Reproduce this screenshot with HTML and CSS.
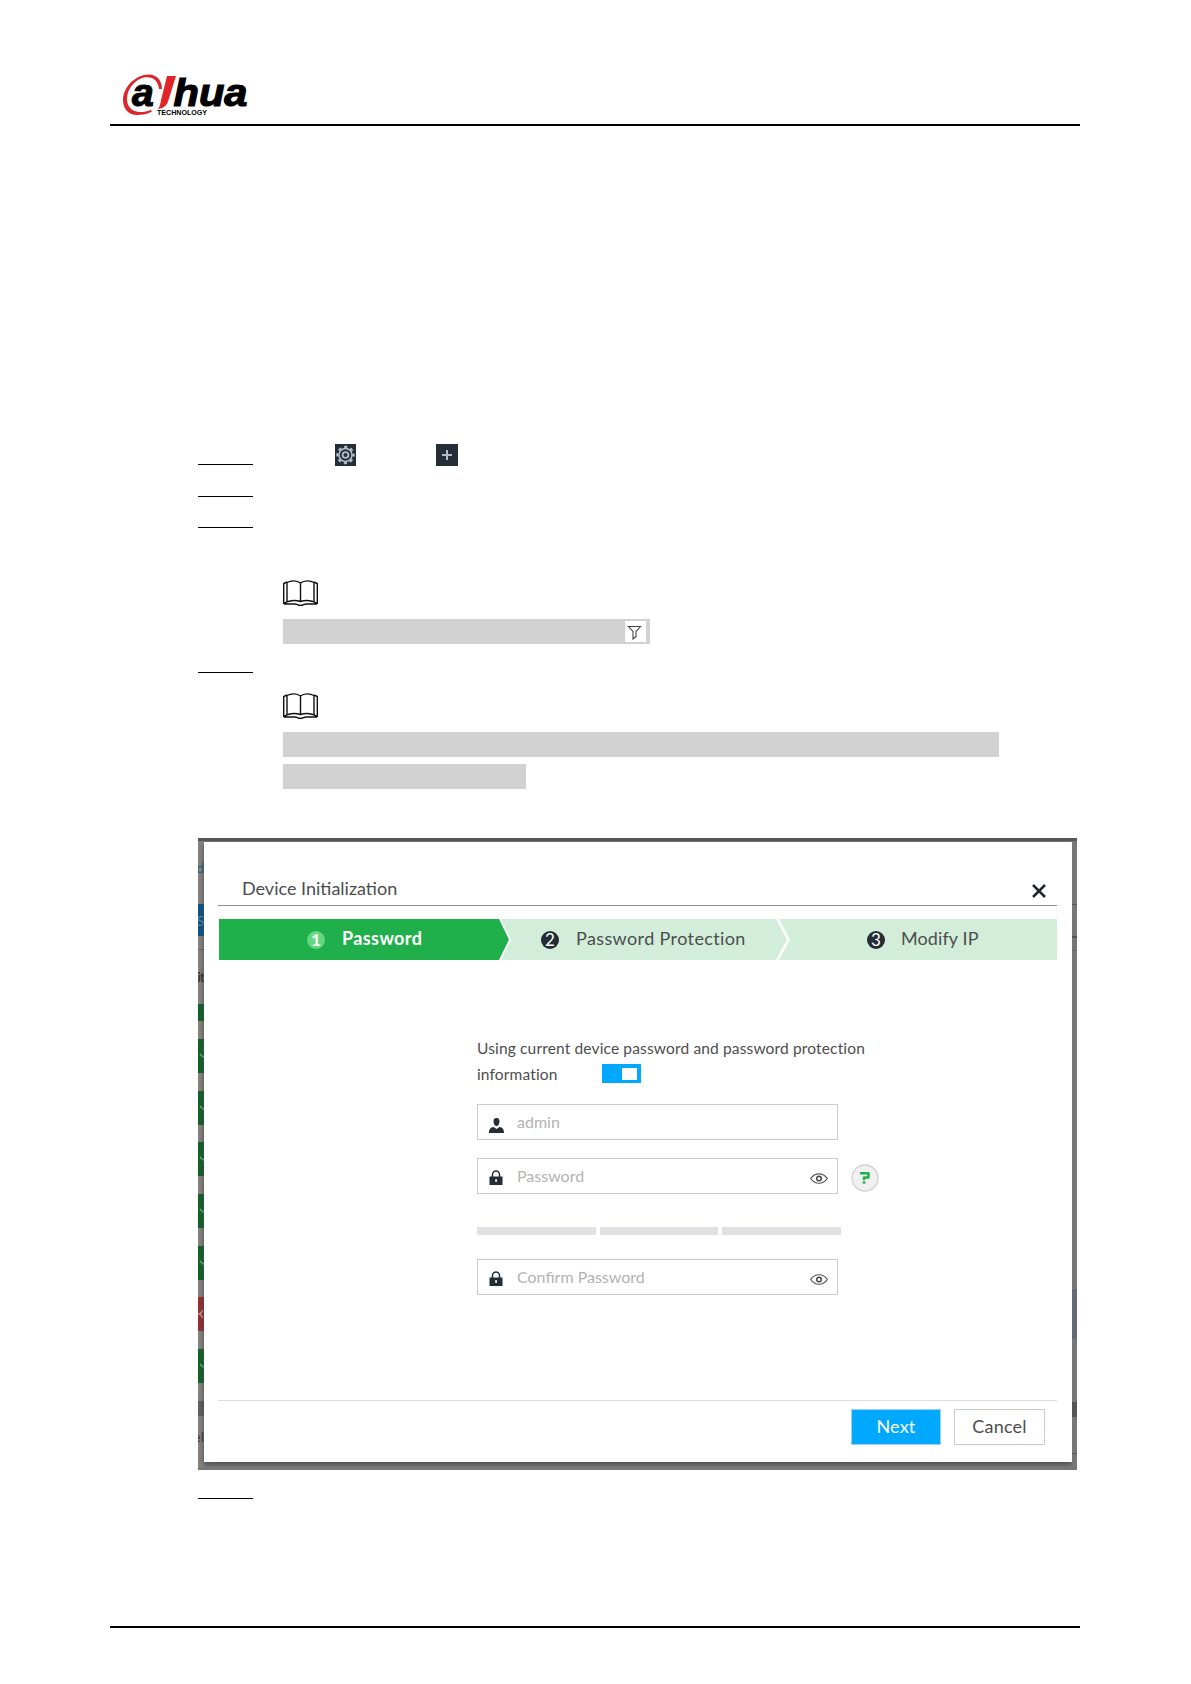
FILE: index.html
```
<!DOCTYPE html>
<html>
	<head>
		<meta charset="UTF-8">
		<title>Device Initialization</title>
		<link rel="stylesheet" href="styles.css">
	</head>
	<body>
		<svg class="defs" width="0" height="0">
			<symbol id="book" viewBox="0 0 35 26">
				<path d="M.7 24V3.500L4 2M34.300 24V3.500L31 2M4 22V2.500C8 .2 14 .2 17.500 3 21 .2 27 .2 31 2.500V22M17.500 3v18M1 24c3-4 12-4 16.500-2.500C22 20 31 20 34 24M1 24h11c2 0 3 1.500 5.500 1.500S21 24 23 24h11" fill="none" stroke="#111" stroke-width="1.400"/>
			</symbol>
			<symbol id="lock" viewBox="0 0 14 15">
				<path d="M3.500 7V4.500a3.500 3.500 0 0 1 7 0V7" fill="none" stroke="#252c33" stroke-width="1.500"/>
				<path d="M.5 6.500h13V15H.5z" fill="#252c33"/>
				<path d="M6.300 9h1.500v3H6.300z" fill="#fff"/>
			</symbol>
			<symbol id="eye" viewBox="0 0 18 11">
				<path d="M.7 5.500C5-.8 13-.8 17.300 5.500 13 11.800 5 11.800.7 5.500z" fill="none" stroke="#555" stroke-width="1.200"/>
				<circle cx="9" cy="5.500" r="2.300" fill="none" stroke="#444" stroke-width="1.500"/>
			</symbol>
			<symbol id="tick" viewBox="0 0 6 6">
				<path d="M2 1l3 3 1-1" fill="none" stroke="#8fae90" stroke-width="1.300"/>
			</symbol>
		</svg>

		<div class="page">
			<div class="head">
				<svg class="logo" width="130" height="46" viewBox="0 0 130 46">
					<path d="M39 17C39 6 31 .5 21 3 9 6 0 17 0 28c0 9 6 15 14 15 6 0 11-1 15-3.500l-1-1.500c-4 1.500-8 2.300-12 2C9 39.500 4 34.500 4 27 4 17 12 7 22 5.300c8-1 13 3 14 11.700z" fill="#dc262c"/>
					<path d="M44 4h9L45.500 28c-1.500 5-4 8-10.500 9 2-3 2.300-5 3-9z" fill="#e2252b"/>
					<text class="logo-text" x="9" y="33.500">a</text>
					<text class="logo-text" x="50.500" y="33.500" textLength="74" lengthAdjust="spacingAndGlyphs">hua</text>
					<text class="logo-sub" x="34" y="43" textLength="50" lengthAdjust="spacingAndGlyphs">TECHNOLOGY</text>
				</svg>
			</div>

			<div class="steps">
				<div class="step step1">
					<i class="mark"></i>
					<svg class="gear" width="21" height="22" viewBox="0 0 21 22">
						<path d="M0 0h21v22H0z" fill="#262d36"/>
						<circle cx="10.500" cy="11" r="8" fill="none" stroke="#aebdca" stroke-width="2.400" stroke-dasharray="3.140 3.143" stroke-dashoffset="1.570"/>
						<circle cx="10.500" cy="11" r="6.500" fill="none" stroke="#aebdca" stroke-width="1.500"/>
						<circle cx="10.500" cy="11" r="2.900" fill="none" stroke="#aebdca" stroke-width="1.800"/>
					</svg>
					<svg class="plus" width="22" height="22" viewBox="0 0 22 22">
						<path d="M0 0h22v22H0z" fill="#262d36"/>
						<path d="M6 11h10M11 6v10" stroke="#aebdca" stroke-width="2"/>
					</svg>
				</div>
				<div class="step step2"><i class="mark"></i></div>
				<div class="step step3"><i class="mark"></i></div>
				<div class="note note1">
					<svg width="35" height="26"><use href="#book"/></svg>
					<div class="bar bar1">
						<svg width="21" height="21" viewBox="0 0 21 21">
							<path d="M0 0h21v21H0z" fill="#fff"/>
							<path d="M3.500 5.500h12l-4.500 5v5l-3 2.500v-7.500z" fill="none" stroke="#444" stroke-width="1.100"/>
						</svg>
					</div>
				</div>
				<div class="step step4"><i class="mark"></i></div>
				<div class="note note2">
					<svg width="35" height="26"><use href="#book"/></svg>
					<div class="bar bar2"></div>
					<div class="bar bar3"></div>
				</div>
			</div>

			<div class="shot">
				<div class="strip">
					<span class="s-top">d</span>
					<span class="s-blue">S</span>
					<span class="s-tab"></span>
					<span class="s-head">it</span>
					<span class="s-ok s-half"></span>
					<span class="s-ok"><svg width="6" height="6"><use href="#tick"/></svg></span>
					<span class="s-ok"><svg width="6" height="6"><use href="#tick"/></svg></span>
					<span class="s-ok"><svg width="6" height="6"><use href="#tick"/></svg></span>
					<span class="s-ok"><svg width="6" height="6"><use href="#tick"/></svg></span>
					<span class="s-ok"><svg width="6" height="6"><use href="#tick"/></svg></span>
					<span class="s-err"><svg width="6" height="10" viewBox="0 0 6 10"><path d="M0 5h2l3-4M2 5l3 4" fill="none" stroke="#c9a09f" stroke-width="1.300"/></svg></span>
					<span class="s-ok"><svg width="6" height="6"><use href="#tick"/></svg></span>
					<span class="s-scroll"></span>
					<span class="s-foot">el</span>
				</div>

				<div class="dialog">
					<div class="title">
						<span>Device Initialization</span>
						<svg width="14" height="14" viewBox="0 0 14 14"><path d="M1 1l12 12M13 1L1 13" stroke="#20262b" stroke-width="2.500"/></svg>
					</div>
					<div class="tabs">
						<div class="tab tab1"><b>1</b><span>Password</span></div>
						<div class="tab tab2"><b>2</b><span>Password Protection</span></div>
						<div class="tab tab3"><b>3</b><span>Modify IP</span></div>
					</div>
					<div class="form">
						<div class="tip">Using current device password and password protection</div>
						<div class="tip tip2"><span>information</span><i class="switch"></i></div>
						<div class="field">
							<svg width="15" height="15" viewBox="0 0 15 15"><path d="M7.500 0C10 0 10.800 2 10.400 4.500 10 7 8.800 8 7.500 8S5 7 4.600 4.500C4.200 2 5 0 7.500 0zM0 15c0-4 1.500-5.500 4.500-6l3 2 3-2c3 .5 4.500 2 4.500 6z" fill="#252c33"/></svg>
							<span>admin</span>
						</div>
						<div class="row">
							<div class="field">
								<svg width="14" height="15"><use href="#lock"/></svg>
								<span>Password</span>
								<svg class="eye" width="18" height="11"><use href="#eye"/></svg>
							</div>
							<svg class="help" width="28" height="28" viewBox="0 0 28 28">
								<circle cx="14" cy="14" r="13" fill="#f0f0f0" stroke="#d2d2d2" stroke-width="1.300"/>
								<path d="M9 9.300h8.500v4.200h-4.500v2.700" fill="none" stroke="#20b04b" stroke-width="2.400" stroke-linejoin="round"/>
								<path d="M11.700 17.500h2.700v2.200h-2.700z" fill="#20b04b"/>
							</svg>
						</div>
						<div class="strength"><i></i><i></i><i></i></div>
						<div class="field">
							<svg width="14" height="15"><use href="#lock"/></svg>
							<span>Confirm Password</span>
							<svg class="eye" width="18" height="11"><use href="#eye"/></svg>
						</div>
					</div>
					<div class="btns">
						<div class="btn next">Next</div>
						<div class="btn cancel">Cancel</div>
					</div>
				</div>
				<div class="edge"></div>
			</div>

			<div class="step step5"><i class="mark"></i></div>
			<div class="foot"></div>
		</div>
	</body>
</html>
```
FILE: styles.css
```
* { box-sizing: border-box;}
body { margin: 0; background: #fff; font-family: Lato, "Liberation Sans", sans-serif; color: #4d4d4d;}
svg { display: block; flex: none;}
.defs { position: absolute;}
.page { width: 1191px; height: 1684px; padding: 72px 111px 0 110px; overflow: hidden;}

.head { height: 54px; border-bottom: 2px solid #000; padding-left: 13px;}
.logo-text { font: italic bold 39px "Liberation Sans", sans-serif; fill: #000; stroke: #000; stroke-width: 1.2px;}
.logo-sub { font: bold 6.5px "Liberation Sans", sans-serif; fill: #000;}

.steps { padding: 318px 0 0 88px; height: 712px;}
.step { display: flex; align-items: flex-end;}
.mark { width: 55px; height: 1px; background: #000;}
.step1 { height: 22px; align-items: flex-start;}
.step1 .mark { margin-top: 20px;}
.gear { margin-left: 82px;}
.plus { margin-left: 80px;}
.step2 { height: 31px;}
.step3 { height: 31px;}
.step4 { height: 29px;}
.note { margin-left: 85px;}
.note1 { margin-top: 52px;}
.note2 { margin-top: 20px;}
.bar { height: 25px; background: #d2d2d2;}
.bar1 { width: 367px; margin-top: 13px; display: flex; justify-content: flex-end; padding: 2px 4px 0 0;}
.bar2 { width: 716px; margin-top: 13px;}
.bar3 { width: 243px; margin-top: 7px;}

.shot { display: flex; width: 879px; height: 632px; margin-left: 88px; background: #7b7b7b; border-top: 3px solid #565656; border-bottom: 3px solid #777; overflow: hidden;}
.strip { width: 6px; height: 626px; overflow: hidden; background: #898582; font-size: 14px;}
.strip span { display: flex; justify-content: flex-end; align-items: center;}
.s-top { height: 52px; color: #175f86; margin-bottom: 11px;}
.s-blue { height: 32px; background: #07568a; color: #6288a0;}
.s-tab { height: 14px; border-bottom: 1px solid #6d6d6d;}
.strip .s-head { height: 54px; color: #333; font-size: 13px; font-weight: bold; letter-spacing: -.8px;}
.s-ok { height: 34px; background: #0d6427; margin-bottom: 17.7px;}
.s-half { height: 17px; margin-bottom: 18px;}
.s-err { height: 34px; background: #9b2d32; margin-bottom: 17.7px;}
.s-scroll { height: 15px; background: #606060;}
.s-foot { height: 42px; color: #333;}

.dialog { width: 868px; height: 620px; margin-top: 1px; background: #fff; padding: 0 15px 0 14px; box-shadow: 0 2px 6px #444;}
.title { display: flex; justify-content: space-between; height: 64px; border-bottom: 1px solid #909090; padding: 35px 11px 0 24px; font-size: 18px; line-height: 22px;}
.title svg { margin-top: 7px;}
.tabs { display: flex; height: 41px; margin: 13px 0 0 1px; background: #fff;}
.tab { display: flex; align-items: center; height: 41px; background: #d2eedb; font-size: 18px;}
.tab b { width: 18px; height: 18px; border-radius: 9px; background: #252c33; color: #fff; font-size: 17px; font-weight: normal; line-height: 17px; text-align: center; letter-spacing: 0;}
.tab span { line-height: 22px; margin-top: -3px;}
.tab1 { width: 290px; background: #20b04b; color: #fff; font-weight: bold; padding-left: 88px; letter-spacing: .4px; clip-path: polygon(0 0, 280px 0, 290px 50%, 280px 100%, 0 100%);}
.tab1 b { background: #64d77f; font-weight: bold;}
.tab1 span { margin-left: 17px;}
.tab2 { width: 287px; margin-left: -8px; padding-left: 40px; letter-spacing: .38px; clip-path: polygon(0 0, 275px 0, 286px 50%, 275px 100%, 0 100%, 10px 50%);}
.tab2 span { margin-left: 17px;}
.tab3 { width: 278px; margin-left: -9px; padding-left: 88px; letter-spacing: .1px; clip-path: polygon(0 0, 100% 0, 100% 100%, 0 100%, 11px 50%);}
.tab3 span { margin-left: 16px;}

.form { height: 440px; padding: 75px 0 0 259px;}
.tip { height: 26px; font-size: 15.5px; line-height: 26px; letter-spacing: .15px; white-space: nowrap;}
.tip2 { display: flex; align-items: center;}
.switch { position: relative; top: -1px; width: 39px; height: 19px; margin-left: 44px; background: #00a8ff;}
.switch:after { content: ""; position: absolute; left: 20px; top: 4px; width: 15px; height: 12px; background: #fff;}
.field { display: flex; align-items: center; width: 361px; height: 36px; border: 1px solid #ccc; padding: 2px 9px 0 11px; font-size: 16px; color: #b3b3b3;}
.field svg { margin-top: 0;}
.field .eye { margin-top: 3px;}
.field span { flex: 1; line-height: 20px; margin: -3px 0 0 14px;}
.tip2 + .field { margin-top: 17px;}
.tip2 + .field svg { margin-top: 4px;}
.tip2 + .field span { margin-left: 13px;}
.row { display: flex; margin-top: 18px;}
.help { margin: 6px 0 0 13px;}
.strength { display: flex; gap: 4px; width: 364px; margin: 33px 0 24px;}
.strength i { flex: 1; height: 8px; background: #e1e1e3; border-radius: 1px;}

.btns { display: flex; justify-content: flex-end; gap: 13px; border-top: 1px solid #ddd; padding: 8px 12px 0 0;}
.btn { width: 91px; height: 36px; border: 1px solid #ccc; font-size: 18px; line-height: 32px; text-align: center; letter-spacing: .2px;}
.next { width: 90px; background: #00a8ff; border-color: #9bd6f5; color: #fff;}

.edge { width: 5px; height: 626px; background: linear-gradient(#777 63px, #555 63px, #555 64px, #777 64px, #777 95px, #555 95px, #555 97px, #777 97px, #777 109px, #666 109px, #666 110px, #777 110px, #777 448px, #626c72 448px, #626c72 498px, #777 498px, #777 561px, #555 561px, #555 576px, #777 576px, #777 612px, #555 612px, #555 613px, #777 613px);}

.step5 { height: 29px; margin-left: 88px;}
.foot { margin-top: 127px; height: 2px; background: #000;}
```
